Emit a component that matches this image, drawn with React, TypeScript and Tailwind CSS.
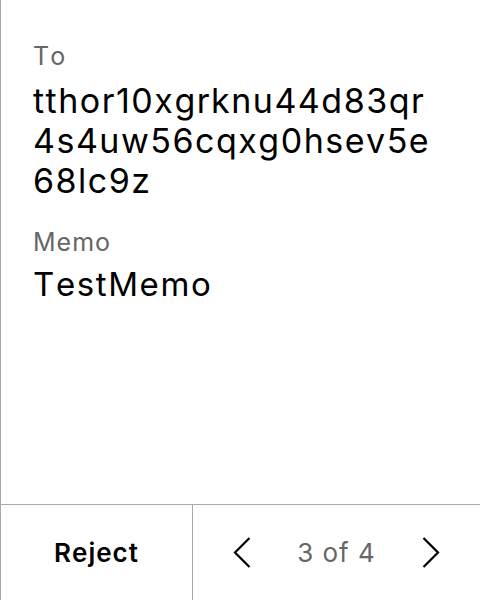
import React from "react";

export default function App() {
  return (
    <div
      className="w-[480px] h-[600px] bg-white flex flex-col border-l border-[#aaaaaa] text-black [font-kerning:none]"
      style={{ fontFamily: "Inter, 'Noto Sans', sans-serif" }}
    >
      <div className="flex-1 flex flex-col pl-[32px] pr-[24px] pt-[40px]">
        <div className="text-[25px] leading-[32px] tracking-[1px] text-[#666666]">To</div>
        <div className="mt-[9px] text-[34px] leading-[40px] tracking-[1.5px]">
          <div>tthor10xgrknu44d83qr</div>
          <div>4s4uw56cqxg0hsev5e</div>
          <div>68lc9z</div>
        </div>
        <div className="mt-[25px] text-[25px] leading-[32px] tracking-[1px] text-[#666666]">Memo</div>
        <div className="mt-[6px] text-[33px] leading-[40px] tracking-[1.6px]">TestMemo</div>
      </div>
      <div className="h-[96px] border-t border-[#aaaaaa] flex">
        <div className="w-[192px] border-r border-[#aaaaaa] flex items-center justify-center text-[26px] font-semibold tracking-[1px]">
          Reject
        </div>
        <div className="flex-1 flex items-center justify-center gap-[46px]">
          <svg width="18" height="31" viewBox="0 0 18 31" fill="none" stroke="black" strokeWidth="2.2">
            <path d="M16.5 1 L2 15.5 L16.5 30" />
          </svg>
          <span className="text-[26px] tracking-[1px] text-[#666666]">3 of 4</span>
          <svg width="18" height="31" viewBox="0 0 18 31" fill="none" stroke="black" strokeWidth="2.2">
            <path d="M1.5 1 L16 15.5 L1.5 30" />
          </svg>
        </div>
      </div>
    </div>
  );
}
